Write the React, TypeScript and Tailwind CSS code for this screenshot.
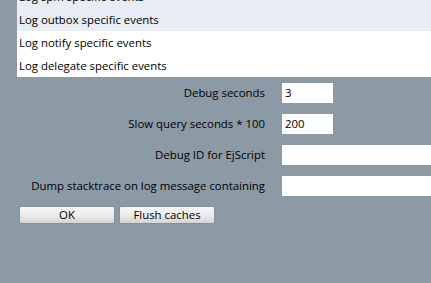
import React from "react";

const font = { fontFamily: '"Open Sans", "Noto Sans", sans-serif' };

function Row({ text, sel }: { text: string; sel?: boolean }) {
  return (
    <div
      className={`h-[23px] shrink-0 flex items-center pl-[2px] text-[11.4px] text-black ${
        sel ? "bg-[#e8ecf5]" : "bg-white"
      }`}
    >
      {text}
    </div>
  );
}

function Field({ label, wide, value }: { label: string; wide?: boolean; value?: string }) {
  return (
    <div className="flex items-center h-[20px]">
      <div className="w-[265px] shrink-0 text-right text-[11.4px] text-black">{label}</div>
      <div
        className={`ml-[17px] h-[20px] bg-white shrink-0 flex items-center pl-[3px] text-[11.4px] text-black ${
          wide ? "w-[170px]" : "w-[51px]"
        }`}
      >
        {value}
      </div>
    </div>
  );
}

function Btn({ children }: { children: React.ReactNode }) {
  return (
    <button className="w-[96px] h-[18px] rounded-[2px] border border-[#8a8f95] bg-gradient-to-b from-[#f7f7f7] via-[#ececec] to-[#d4d4d4] text-[11.4px] text-black leading-none flex items-center justify-center">
      {children}
    </button>
  );
}

export default function App() {
  return (
    <div className="w-[431px] h-[283px] overflow-hidden bg-[#8c9aa6]" style={font}>
      <div className="ml-[17px] h-[77px] overflow-hidden flex flex-col justify-end">
        <Row text="Log spm specific events" sel />
        <Row text="Log outbox specific events" sel />
        <Row text="Log notify specific events" />
        <Row text="Log delegate specific events" />
      </div>
      <div className="pt-[6px] flex flex-col gap-[11px]">
        <Field label="Debug seconds" value="3" />
        <Field label="Slow query seconds * 100" value="200" />
        <Field label="Debug ID for EjScript" wide />
        <Field label="Dump stacktrace on log message containing" wide />
      </div>
      <div className="mt-[10px] ml-[19px] flex gap-[4px]">
        <Btn>OK</Btn>
        <Btn>Flush caches</Btn>
      </div>
    </div>
  );
}
